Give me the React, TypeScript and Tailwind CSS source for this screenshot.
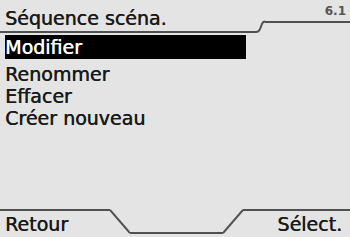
import React from 'react';

const font = { fontFamily: '"DejaVu Sans", "Liberation Sans", sans-serif' };

const items = ['Modifier', 'Renommer', 'Effacer', 'Créer nouveau'];

// slightly heavier than regular, like the LCD font
const txt = 'block text-[19px] whitespace-nowrap [text-shadow:0.5px_0_0_currentColor]';

export default function App() {
  const selected = 0;

  return (
    <div
      className="w-[350px] h-[237px] bg-[#e4e4e4] text-[#1a1a1a] flex flex-col overflow-hidden"
      style={font}
    >
      {/* title bar */}
      <div className="flex h-[33px] shrink-0">
        <div className="w-[256px] border-b-2 border-[#505050] flex items-end pl-[5px]">
          <span className={`${txt} leading-[26px]`}>Séquence scéna.</span>
        </div>
        <svg width="9" height="33" className="shrink-0">
          <path d="M0 32 Q3 32 4 29 L6 24 Q7 21.5 9 21.5" stroke="#505050" strokeWidth="2" fill="none" />
        </svg>
        <div className="flex-1 h-[23px] border-b-2 border-[#505050] flex items-start justify-end pr-[4px]">
          <span className="text-[12px] leading-[13px] mt-[5px] font-bold text-[#555]">6.1</span>
        </div>
      </div>

      {/* menu */}
      <div className="flex flex-col pt-[2px]">
        {items.map((item, i) =>
          i === selected ? (
            <div key={item} className="ml-[5px] w-[241px] h-[24px] mb-[4px] bg-black text-white flex items-center">
              <span className={`${txt} leading-[24px]`}>{item}</span>
            </div>
          ) : (
            <div key={item} className="pl-[5px] h-[22px] flex items-center">
              <span className={`${txt} leading-[22px]`}>{item}</span>
            </div>
          )
        )}
      </div>

      {/* soft keys */}
      <div className="mt-auto flex h-[28px] shrink-0">
        <div className="w-[110px] border-t-2 border-[#505050] flex items-center pl-[5px]">
          <span className={`${txt} leading-[24px]`}>Retour</span>
        </div>
        <svg width="20" height="28" className="shrink-0">
          <path d="M0 1 L20 24" stroke="#505050" strokeWidth="2" fill="none" />
        </svg>
        <div className="w-[93px] h-[25px] border-b-2 border-[#505050]" />
        <svg width="20" height="28" className="shrink-0">
          <path d="M0 24 L20 1" stroke="#505050" strokeWidth="2" fill="none" />
        </svg>
        <div className="flex-1 border-t-2 border-[#505050] flex items-center justify-end pr-[8px]">
          <span className={`${txt} leading-[24px]`}>Sélect.</span>
        </div>
      </div>
    </div>
  );
}
